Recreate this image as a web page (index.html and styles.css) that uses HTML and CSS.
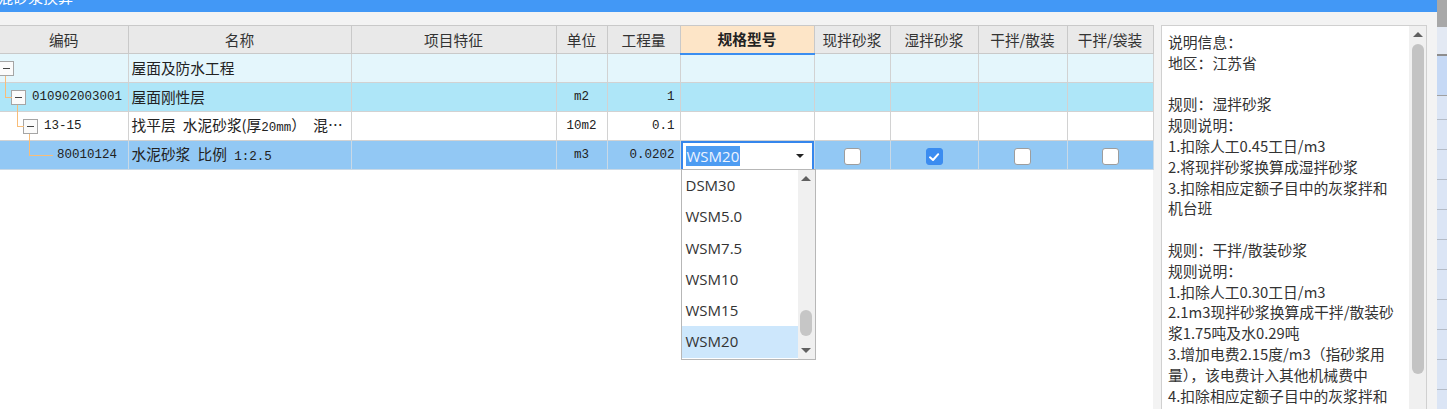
FILE: index.html
```html
<!DOCTYPE html>
<html lang="zh-CN">
<head>
<meta charset="utf-8">
<title>干混砂浆换算</title>
<link rel="stylesheet" href="styles.css">
</head>
<body>
<div class="app">
  <div class="window">
    <div class="titlebar"><span class="title">干混砂浆换算</span></div>
    <div class="content">
      <div class="grid-area">
        <table class="grid">
          <colgroup>
            <col class="w-code"><col class="w-name"><col class="w-feat"><col class="w-unit"><col class="w-qty">
            <col class="w-spec"><col class="w-cb1"><col class="w-cb2"><col class="w-cb3"><col class="w-cb4">
          </colgroup>
          <thead>
            <tr>
              <th class="first">编码</th>
              <th>名称</th>
              <th>项目特征</th>
              <th>单位</th>
              <th>工程量</th>
              <th class="active">规格型号</th>
              <th>现拌砂浆</th>
              <th>湿拌砂浆</th>
              <th>干拌/散装</th>
              <th>干拌/袋装</th>
            </tr>
          </thead>
          <tbody>
            <tr class="r1">
              <td class="code first"><div class="node l0"><span class="exp"></span></div></td>
              <td class="name">屋面及防水工程</td>
              <td></td><td></td><td></td><td></td><td></td><td></td><td></td><td></td>
            </tr>
            <tr class="r2">
              <td class="code first"><div class="node l1"><span class="exp"></span><span class="cd">010902003001</span></div></td>
              <td class="name">屋面刚性层</td>
              <td></td>
              <td class="unit">m2</td>
              <td class="qty">1</td>
              <td></td><td></td><td></td><td></td><td></td>
            </tr>
            <tr class="r3">
              <td class="code first"><div class="node l2"><span class="exp long"></span><span class="cd">13-15</span></div></td>
              <td class="name">找平层 水泥砂浆(厚<span class="mono">20mm</span>） 混…</td>
              <td></td>
              <td class="unit">10m2</td>
              <td class="qty">0.1</td>
              <td></td><td></td><td></td><td></td><td></td>
            </tr>
            <tr class="r4">
              <td class="code first"><div class="node l3"><span class="cd">80010124</span></div></td>
              <td class="name">水泥砂浆 比例 <span class="mono">1:2.5</span></td>
              <td></td>
              <td class="unit">m3</td>
              <td class="qty">0.0202</td>
              <td class="sel">
                <div class="select">
                  <span class="sel-text">WSM20</span>
                  <span class="caret"></span>
                  <div class="dropdown">
                    <div class="items">
                      <div class="item">DSM30</div>
                      <div class="item">WSM5.0</div>
                      <div class="item">WSM7.5</div>
                      <div class="item">WSM10</div>
                      <div class="item">WSM15</div>
                      <div class="item hot">WSM20</div>
                    </div>
                    <div class="dd-scroll">
                      <span class="arrow up"></span>
                      <span class="dd-thumb"></span>
                      <span class="arrow down"></span>
                    </div>
                  </div>
                </div>
              </td>
              <td class="cbc"><span class="cb"></span></td>
              <td class="cbc"><span class="cb on"><svg viewBox="0 0 16 16" width="16" height="16"><path d="M4 8.3 L7 11 L12.2 5.2" fill="none" stroke="#fff" stroke-width="2" stroke-linecap="round" stroke-linejoin="round"/></svg></span></td>
              <td class="cbc"><span class="cb"></span></td>
              <td class="cbc"><span class="cb"></span></td>
            </tr>
          </tbody>
        </table>
      </div>
      <div class="panel">
        <div class="panel-text">
          <div class="ln">说明信息：</div>
          <div class="ln">地区：江苏省</div>
          <div class="ln blank"></div>
          <div class="ln">规则：湿拌砂浆</div>
          <div class="ln">规则说明：</div>
          <div class="ln">1.扣除人工0.45工日/m3</div>
          <div class="ln">2.将现拌砂浆换算成湿拌砂浆</div>
          <div class="ln">3.扣除相应定额子目中的灰浆拌和</div>
          <div class="ln">机台班</div>
          <div class="ln blank"></div>
          <div class="ln">规则：干拌/散装砂浆</div>
          <div class="ln">规则说明：</div>
          <div class="ln">1.扣除人工0.30工日/m3</div>
          <div class="ln">2.1m3现拌砂浆换算成干拌/散装砂</div>
          <div class="ln">浆1.75吨及水0.29吨</div>
          <div class="ln">3.增加电费2.15度/m3（指砂浆用</div>
          <div class="ln">量），该电费计入其他机械费中</div>
          <div class="ln">4.扣除相应定额子目中的灰浆拌和</div>
          <div class="ln">机台班</div>
        </div>
        <div class="vscroll">
          <span class="arrow up"></span>
          <span class="thumb"></span>
        </div>
      </div>
    </div>
  </div>
  <div class="behind"></div>
</div>
</body>
</html>
```

FILE: styles.css
```css
* { box-sizing: border-box; }
html, body { margin: 0; padding: 0; }
body {
  width: 1447px;
  height: 409px;
  overflow: hidden;
  font-family: "Noto Sans CJK SC", "Microsoft YaHei", sans-serif;
  color: #333;
  background: #f3f3f3;
}
.app { display: flex; height: 409px; overflow: hidden; }
.window {
  width: 1437px;
  flex: none;
  display: flex;
  flex-direction: column;
  background: #f3f3f3;
}
.titlebar {
  height: 12px;
  flex: none;
  background: #4298f6;
  overflow: hidden;
}
.title {
  display: block;
  color: #fff;
  font-size: 15px;
  line-height: 16px;
  margin-top: -11px;
  margin-left: -17px;
  white-space: nowrap;
}
.content {
  flex: 1;
  min-height: 0;
  display: flex;
  gap: 8px;
  padding-top: 13px;
  padding-right: 10px;
  overflow: hidden;
}
.grid-area {
  width: 1153px;
  flex: none;
  background: #fff;
}
.grid {
  width: 1153px;
  border-collapse: collapse;
  table-layout: fixed;
}
.w-code { width: 128px; }
.w-name { width: 223px; }
.w-feat { width: 205px; }
.w-unit { width: 51px; }
.w-qty { width: 73px; }
.w-spec { width: 134px; }
.w-cb1 { width: 76px; }
.w-cb2 { width: 88px; }
.w-cb3 { width: 89px; }
.w-cb4 { width: 86px; }

.grid th {
  height: 28px;
  padding: 0;
  background: #e9e9e9;
  border: 1px solid #c9c9c9;
  font-weight: normal;
  font-size: 14.7px;
  line-height: 20px;
  text-align: center;
  color: #333;
  white-space: nowrap;
}
.grid th.active {
  background: #fde5c7;
  font-weight: bold;
  border-bottom: 2px solid #3b8ef0;
  color: #222;
}
.grid .first { border-left: none; }
.grid td {
  height: 28px;
  padding: 0 4px;
  border: 1px solid #d2d2d2;
  font-size: 14.7px;
  line-height: 20px;
  white-space: nowrap;
  overflow: hidden;
  color: #222;
  vertical-align: middle;
}
.r1 { background: #e4f6fc; }
.r2 { background: #aee6f8; }
.r3 { background: #ffffff; }
.r4 { background: #92c8f4; }
.r4 td { border-color: #c9d9e6; }

.mono {
  font-family: "Liberation Mono", monospace;
  font-size: 12.5px;
}
.grid td.code { padding: 0; overflow: visible; }
.grid td.name { padding-left: 3px; overflow: hidden; word-spacing: 4px; }
.grid td.unit {
  text-align: center;
  font-family: "Liberation Mono", monospace;
  font-size: 12.5px;
}
.grid td.qty {
  text-align: right;
  padding-right: 5px;
  font-family: "Liberation Mono", monospace;
  font-size: 12.5px;
}
.node {
  display: flex;
  align-items: center;
  height: 28px;
}
.l0 { padding-left: 0; }
.l0 .exp { margin-left: -1px; }
.l1 { padding-left: 11px; }
.l2 { padding-left: 23px; }
.l3 { padding-left: 57px; }
.cd {
  font-family: "Liberation Mono", monospace;
  font-size: 12.5px;
  color: #222;
}
.exp {
  position: relative;
  flex: none;
  width: 15px;
  height: 15px;
  border: 1px solid #a5a5a5;
  background: #fbfbfb;
  margin-right: 6px;
}
.exp::before {
  content: "";
  position: absolute;
  left: 3px;
  right: 3px;
  top: 6px;
  height: 1px;
  background: #444;
}
.exp::after {
  content: "";
  position: absolute;
  left: 5px;
  top: calc(100% + 1px);
  width: 6px;
  height: 21px;
  border-left: 1px solid #f8bd79;
  border-bottom: 1px solid #f8bd79;
  z-index: 2;
}
.exp.long::after { width: 23px; }

.grid td.sel { padding: 0; overflow: visible; }
.select {
  position: relative;
  height: 28px;
  border: 2px solid #3586ec;
  border-bottom: none;
  background: #fff;
  display: flex;
  align-items: center;
  padding-left: 3px;
  padding-right: 8px;
}
.sel-text {
  font-family: "Open Sans", "Liberation Sans", sans-serif;
  font-size: 15px;
  line-height: 20px;
  background: #4d9cf2;
  color: #eef4ff;
  padding: 0 1px;
}
.caret {
  margin-left: auto;
  width: 0;
  height: 0;
  border-left: 4px solid transparent;
  border-right: 4px solid transparent;
  border-top: 4px solid #222;
}
.dropdown {
  position: absolute;
  top: 100%;
  left: -2px;
  width: 135px;
  height: 191px;
  border: 1px solid #b7b7b7;
  background: #fff;
  display: flex;
  z-index: 5;
}
.items { flex: 1; }
.item {
  height: 31.3px;
  line-height: 31px;
  padding-left: 4px;
  font-family: "Open Sans", "Liberation Sans", sans-serif;
  font-size: 15px;
  color: #333;
}
.item.hot { background: #cde7fc; }
.dd-scroll {
  width: 17px;
  flex: none;
  background: #f0f0f0;
  display: flex;
  flex-direction: column;
  align-items: center;
  padding: 6px 0 6px;
}
.arrow {
  display: block;
  width: 0;
  height: 0;
  border-left: 5px solid transparent;
  border-right: 5px solid transparent;
}
.arrow.up { border-bottom: 5px solid #606060; }
.arrow.down { border-top: 5px solid #606060; }
.dd-thumb {
  width: 12px;
  height: 26px;
  border-radius: 6px;
  background: #c6c6c6;
  margin-top: auto;
  margin-bottom: 12px;
}

.grid td.cbc { text-align: center; padding: 0; }
.cb {
  display: inline-block;
  vertical-align: middle;
  width: 17px;
  height: 17px;
  border: 1px solid #9d9d9d;
  border-radius: 3px;
  background: #fff;
}
.cb.on {
  background: #3b8cf0;
  border-color: #3b8cf0;
}
.cb.on svg { display: block; margin: -0.5px 0 0 -0.5px; }

.panel {
  width: 266px;
  flex: none;
  height: 400px;
  border: 1px solid #d0d0d0;
  background: #fff;
  display: flex;
}
.panel-text {
  flex: 1;
  padding: 6px 0 0 6px;
  font-size: 14.8px;
  line-height: 20.8px;
  color: #333;
  white-space: nowrap;
  overflow: hidden;
}
.ln.blank { height: 20.8px; }
.vscroll {
  width: 17px;
  flex: none;
  background: #f0f0f0;
  display: flex;
  flex-direction: column;
  align-items: center;
  padding-top: 6px;
}
.thumb {
  width: 12px;
  height: 330px;
  margin-top: 7px;
  border-radius: 6px;
  background: #c3c3c3;
}

.behind {
  flex: 1;
  background:
    linear-gradient(to bottom,
      #a8a8a8 0 27px,
      #e3e9f3 27px 54px,
      #8d8d8d 54px 56px,
      #c6d9f5 56px 95px,
      #a0a0a0 95px 96px,
      transparent 96px),
    repeating-linear-gradient(to bottom,
      #dbe5f5 0 29px,
      #b4bcc8 29px 30px);
}
```
